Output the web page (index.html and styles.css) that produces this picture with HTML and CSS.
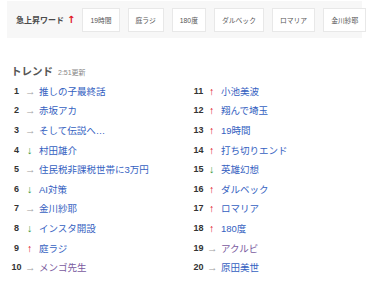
FILE: index.html
```html
<!DOCTYPE html>
<html lang="ja">
<head>
<meta charset="utf-8">
<link rel="stylesheet" href="styles.css">
</head>
<body>
<div class="rise">
  <span class="rise-title">急上昇ワード<span class="fire">&#x2191;</span></span>
  <a class="chip">19時間</a>
  <a class="chip">庭ラジ</a>
  <a class="chip">180度</a>
  <a class="chip">ダルベック</a>
  <a class="chip">ロマリア</a>
  <a class="chip">金川紗耶</a>
</div>
<div class="trend-head"><span class="trend-title">トレンド</span><span class="trend-time">2:51更新</span></div>
<ol class="trend-list">
  <li><b>1</b><i class="ar same">→</i><a>推しの子最終話</a></li>
  <li><b>2</b><i class="ar same">→</i><a>赤坂アカ</a></li>
  <li><b>3</b><i class="ar same">→</i><a>そして伝説へ…</a></li>
  <li><b>4</b><i class="ar down">↓</i><a>村田雄介</a></li>
  <li><b>5</b><i class="ar same">→</i><a>住民税非課税世帯に3万円</a></li>
  <li><b>6</b><i class="ar down">↓</i><a>AI対策</a></li>
  <li><b>7</b><i class="ar same">→</i><a>金川紗耶</a></li>
  <li><b>8</b><i class="ar down">↓</i><a>インスタ開設</a></li>
  <li><b>9</b><i class="ar up">↑</i><a>庭ラジ</a></li>
  <li><b>10</b><i class="ar same">→</i><a class="visited">メンゴ先生</a></li>
  <li><b>11</b><i class="ar up">↑</i><a>小池美波</a></li>
  <li><b>12</b><i class="ar up">↑</i><a>翔んで埼玉</a></li>
  <li><b>13</b><i class="ar up">↑</i><a>19時間</a></li>
  <li><b>14</b><i class="ar up">↑</i><a>打ち切りエンド</a></li>
  <li><b>15</b><i class="ar down">↓</i><a>英雄幻想</a></li>
  <li><b>16</b><i class="ar up">↑</i><a>ダルベック</a></li>
  <li><b>17</b><i class="ar up">↑</i><a>ロマリア</a></li>
  <li><b>18</b><i class="ar up">↑</i><a>180度</a></li>
  <li><b>19</b><i class="ar same">→</i><a class="visited">アクルビ</a></li>
  <li><b>20</b><i class="ar same">→</i><a>原田美世</a></li>
</ol>
</body>
</html>
```
FILE: styles.css
```css
body {
  margin: 0;
  background: #fff;
  font-family: "Liberation Sans", "Noto Sans CJK JP", sans-serif;
  color: #333;
}
.rise {
  margin: 1px 11px 0 7px;
  height: 37px;
  background: #f7f7f7;
  display: flex;
  align-items: center;
  gap: 8px;
  padding-left: 9px;
  white-space: nowrap;
}
.rise-title {
  font-size: 8px;
  color: #4a4a4a;
  font-weight: bold;
  margin-right: -1px;
  display: flex;
  align-items: center;
  flex-shrink: 0;
}
.fire {
  color: #e0141e;
  font-weight: bold;
  font-size: 10px;
  margin-left: 3px;
  font-family: "DejaVu Sans", sans-serif;
}
.chip {
  flex-shrink: 0;
  background: #fff;
  border: 1px solid #e8e8e8;
  height: 24px;
  box-sizing: border-box;
  padding: 0 7px;
  display: flex;
  align-items: center;
  font-size: 6.8px;
  color: #555;
}
.trend-head {
  margin: 25px 0 0 11px;
  display: flex;
  align-items: baseline;
  gap: 5px;
}
.trend-title {
  font-size: 10.5px;
  font-weight: bold;
  color: #555;
}
.trend-time {
  font-size: 7px;
  color: #888;
}
.trend-list {
  list-style: none;
  margin: 3px 0 0 11px;
  padding: 0;
  display: grid;
  grid-template-columns: 182px 170px;
  grid-template-rows: repeat(10, 19.6px);
  grid-auto-flow: column;
}
.trend-list li {
  display: flex;
  align-items: center;
  font-size: 9.5px;
  white-space: nowrap;
}
.trend-list b {
  font-size: 9px;
  color: #333;
  width: 11px;
  text-align: center;
  margin-right: 3px;
}
.ar {
  font-style: normal;
  font-size: 10.5px;
  width: 9px;
  text-align: center;
  margin-right: 5px;
  font-family: "Noto Sans", sans-serif;
}
.same { color: #a0a0a0; }
.up { color: #e0141e; }
.down { color: #3a9a3a; }
.trend-list a {
  color: #3461c1;
}
.trend-list a.visited {
  color: #7a5a9e;
}
```
